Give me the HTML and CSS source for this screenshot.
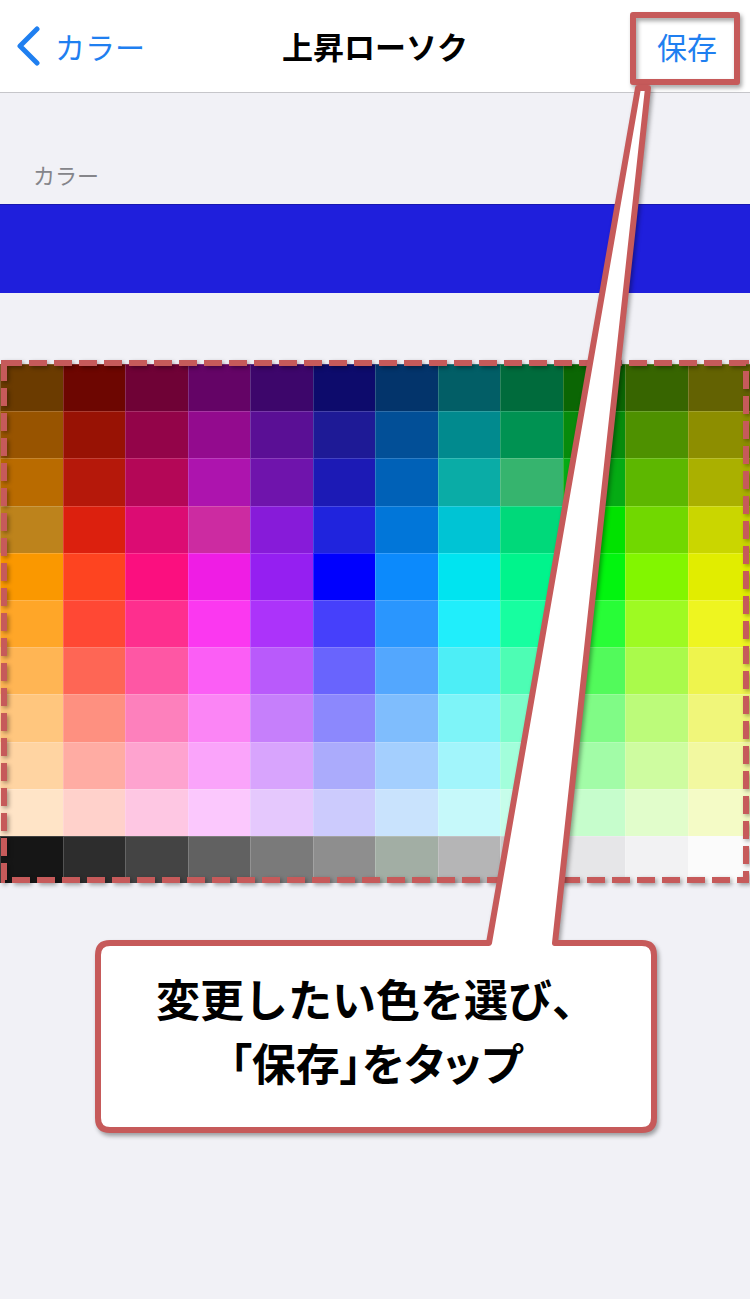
FILE: index.html
```html
<!DOCTYPE html>
<html lang="ja">
<head>
<meta charset="utf-8">
<title>上昇ローソク</title>
<link rel="stylesheet" href="styles.css">
</head>
<body>
<div class="page">
  <header class="nav">
    <div class="nav-back">
      <svg class="chev" width="26" height="40" viewBox="0 0 26 40"><path d="M22 3 L5 20 L22 37" fill="none" stroke="#1f7ff0" stroke-width="5" stroke-linecap="round" stroke-linejoin="round"/></svg>
      <span class="nav-link">カラー</span>
    </div>
    <div class="nav-title">上昇ローソク</div>
    <div class="nav-save nav-link">保存</div>
  </header>

  <div class="section-label">カラー</div>
  <div class="color-bar"></div>

  <div class="palette">
    <div class="c" style="background:#6b3b00"></div><div class="c" style="background:#6d0601"></div><div class="c" style="background:#6f0236"></div><div class="c" style="background:#640466"></div><div class="c" style="background:#3d066b"></div><div class="c" style="background:#0d0b6c"></div><div class="c" style="background:#03346b"></div><div class="c" style="background:#025e66"></div><div class="c" style="background:#006b3c"></div><div class="c" style="background:#0b6604"></div><div class="c" style="background:#376500"></div><div class="c" style="background:#636202"></div>
    <div class="c" style="background:#985400"></div><div class="c" style="background:#981204"></div><div class="c" style="background:#930449"></div><div class="c" style="background:#930b8e"></div><div class="c" style="background:#5a0f95"></div><div class="c" style="background:#1e1a96"></div><div class="c" style="background:#024f97"></div><div class="c" style="background:#018a8e"></div><div class="c" style="background:#009252"></div><div class="c" style="background:#078b0c"></div><div class="c" style="background:#4e9100"></div><div class="c" style="background:#8d8e00"></div>
    <div class="c" style="background:#b96b00"></div><div class="c" style="background:#b5180a"></div><div class="c" style="background:#b40757"></div><div class="c" style="background:#ad14ae"></div><div class="c" style="background:#6f14ac"></div><div class="c" style="background:#1c1ab5"></div><div class="c" style="background:#0061b7"></div><div class="c" style="background:#0aaca6"></div><div class="c" style="background:#36b46e"></div><div class="c" style="background:#05ab14"></div><div class="c" style="background:#5db700"></div><div class="c" style="background:#aab000"></div>
    <div class="c" style="background:#bd831c"></div><div class="c" style="background:#dc200e"></div><div class="c" style="background:#dc0c73"></div><div class="c" style="background:#cc2ba1"></div><div class="c" style="background:#871bd9"></div><div class="c" style="background:#2024dd"></div><div class="c" style="background:#0176d9"></div><div class="c" style="background:#00c4d4"></div><div class="c" style="background:#00d97a"></div><div class="c" style="background:#01e200"></div><div class="c" style="background:#71d800"></div><div class="c" style="background:#cad600"></div>
    <div class="c" style="background:#fa9800"></div><div class="c" style="background:#fe4420"></div><div class="c" style="background:#fb0f7f"></div><div class="c" style="background:#ef1de4"></div><div class="c" style="background:#951ff1"></div><div class="c" style="background:#0000fe"></div><div class="c" style="background:#0c8afc"></div><div class="c" style="background:#00e4f0"></div><div class="c" style="background:#00f48c"></div><div class="c" style="background:#02f50f"></div><div class="c" style="background:#82f600"></div><div class="c" style="background:#e1ed00"></div>
    <div class="c" style="background:#ffa628"></div><div class="c" style="background:#ff4834"></div><div class="c" style="background:#fe2f8e"></div><div class="c" style="background:#fb38f0"></div><div class="c" style="background:#ac33fa"></div><div class="c" style="background:#4640fb"></div><div class="c" style="background:#2a96fe"></div><div class="c" style="background:#20eefb"></div><div class="c" style="background:#17fea0"></div><div class="c" style="background:#28fd37"></div><div class="c" style="background:#9efa22"></div><div class="c" style="background:#eef520"></div>
    <div class="c" style="background:#ffb554"></div><div class="c" style="background:#fe6655"></div><div class="c" style="background:#fe57a4"></div><div class="c" style="background:#fb5ef5"></div><div class="c" style="background:#b95afb"></div><div class="c" style="background:#6964fd"></div><div class="c" style="background:#53a7fe"></div><div class="c" style="background:#4deef6"></div><div class="c" style="background:#4dfdb4"></div><div class="c" style="background:#52fa5b"></div><div class="c" style="background:#aafa4b"></div><div class="c" style="background:#eef44d"></div>
    <div class="c" style="background:#ffc67e"></div><div class="c" style="background:#fe9080"></div><div class="c" style="background:#fd80bc"></div><div class="c" style="background:#fb85f5"></div><div class="c" style="background:#c67ffb"></div><div class="c" style="background:#8c88fd"></div><div class="c" style="background:#7fbdfd"></div><div class="c" style="background:#7ef4f8"></div><div class="c" style="background:#7cfdcb"></div><div class="c" style="background:#80fb86"></div><div class="c" style="background:#bcfb7a"></div><div class="c" style="background:#f0f67a"></div>
    <div class="c" style="background:#ffd4a2"></div><div class="c" style="background:#ffaca3"></div><div class="c" style="background:#fea3cf"></div><div class="c" style="background:#faa4fa"></div><div class="c" style="background:#d8a4fd"></div><div class="c" style="background:#ababfc"></div><div class="c" style="background:#a4cffe"></div><div class="c" style="background:#a2f5fb"></div><div class="c" style="background:#a2fedb"></div><div class="c" style="background:#a2fca7"></div><div class="c" style="background:#cefca0"></div><div class="c" style="background:#f2f8a0"></div>
    <div class="c" style="background:#ffe4c7"></div><div class="c" style="background:#ffd1cb"></div><div class="c" style="background:#fec7e3"></div><div class="c" style="background:#fbc8fd"></div><div class="c" style="background:#e5c8fd"></div><div class="c" style="background:#cccbfd"></div><div class="c" style="background:#c9e3fd"></div><div class="c" style="background:#c6f9fa"></div><div class="c" style="background:#c6fdea"></div><div class="c" style="background:#c6fdcc"></div><div class="c" style="background:#e1fdcb"></div><div class="c" style="background:#f4fbc6"></div>
    <div class="c" style="background:#161616"></div><div class="c" style="background:#2d2d2d"></div><div class="c" style="background:#444444"></div><div class="c" style="background:#616161"></div><div class="c" style="background:#7a7a7a"></div><div class="c" style="background:#8e8e8e"></div><div class="c" style="background:#a2aea4"></div><div class="c" style="background:#b5b5b6"></div><div class="c" style="background:#cdcdcd"></div><div class="c" style="background:#e6e6e8"></div><div class="c" style="background:#f2f2f3"></div><div class="c" style="background:#fbfbfb"></div>
  </div>

  <svg class="annot" width="750" height="1299" viewBox="0 0 750 1299">
    <rect class="ann-stroke" x="633" y="15" width="104" height="67" fill="none"/>
    <rect class="ann-dash" x="4" y="363" width="742" height="517" fill="none"/>
    <path class="ann-stroke callout-shape" d="M110 943 H489 L638 88 L648 88 L555 943 H642 Q654 943 654 955 V1118 Q654 1130 642 1130 H110 Q98 1130 98 1118 V955 Q98 943 110 943 Z"/>
  </svg>
  <div class="callout-text">
    <div>変更したい色を選び、</div>
    <div class="prop">「保存」をタップ</div>
  </div>
</div>
</body>
</html>
```

FILE: styles.css
```css
html, body {
  margin: 0;
  padding: 0;
}
body {
  background: #f1f1f6;
  font-family: "Noto Sans CJK JP", "Noto Sans", sans-serif;
}
.page {
  position: relative;
  width: 750px;
  height: 1299px;
  overflow: hidden;
}
.nav {
  height: 92px;
  background: #ffffff;
  border-bottom: 1px solid #c6c6ca;
  display: flex;
  align-items: center;
  justify-content: space-between;
  padding: 0 33px 0 15px;
  position: relative;
}
.nav-back {
  display: flex;
  align-items: center;
  gap: 14px;
  width: 200px;
}
.chev {
  display: block;
}
.nav-link {
  color: #1f7ff0;
  font-size: 30px;
  line-height: 40px;
}
.nav-title {
  position: absolute;
  left: 0;
  right: 0;
  top: 26px;
  text-align: center;
  font-size: 31px;
  line-height: 40px;
  font-weight: 700;
  color: #000;
  pointer-events: none;
}
.nav-save {
  text-align: right;
}
.section-label {
  padding: 61px 0 0 33px;
  height: 50px;
  font-size: 22px;
  line-height: 40px;
  color: #85858a;
}
.color-bar {
  height: 88px;
  background: #1f1fdc;
  border-top: 1px solid #1818b0;
}
.palette {
  margin-top: 71px;
  display: grid;
  grid-template-columns: repeat(12, 1fr);
  grid-template-rows: repeat(11, 47.2px);
}
.c {
  box-shadow: inset 1px 1px 0 rgba(255, 255, 255, 0.18);
}
.annot {
  position: absolute;
  left: 0;
  top: 0;
}
.ann-stroke {
  stroke: #c65a5a;
  stroke-width: 6;
  stroke-linejoin: round;
  filter: drop-shadow(2px 3px 2px rgba(0, 0, 0, 0.35));
}
.callout-shape {
  fill: #ffffff;
}
.ann-dash {
  stroke: #c65a5a;
  stroke-width: 6;
  stroke-dasharray: 18 7;
  filter: drop-shadow(2px 2px 2px rgba(0, 0, 0, 0.35));
}
.callout-text {
  position: absolute;
  left: 98px;
  top: 943px;
  width: 556px;
  height: 187px;
  display: flex;
  flex-direction: column;
  align-items: center;
  justify-content: center;
  font-size: 44px;
  line-height: 64px;
  font-weight: 700;
  color: #000;
  padding-bottom: 14px;
  box-sizing: border-box;
}
.prop {
  font-feature-settings: "palt";
}
```
